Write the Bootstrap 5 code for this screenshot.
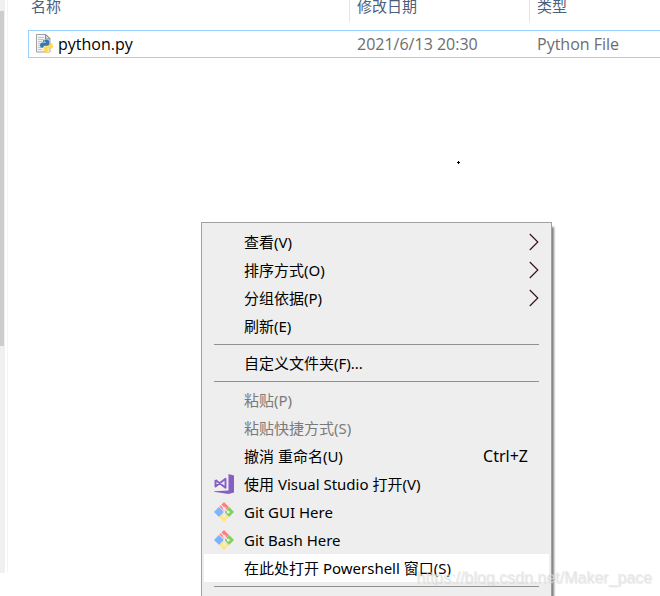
<!DOCTYPE html>
<html lang="zh-CN">
<head>
<meta charset="utf-8">
<meta name="viewport" content="width=device-width, initial-scale=1">
<title>python.py</title>
<link href="https://cdn.jsdelivr.net/npm/bootstrap@5.3.0/dist/css/bootstrap.min.css" rel="stylesheet">
<style>
body { font-family: "Noto Sans", "Noto Sans CJK SC", sans-serif; font-size: 15px; background: #fff; color: #000; }
.scroll-track { width: 5px; margin-bottom: 23px; background: #f0f0f0; padding-top: 11px; }
.scroll-thumb { width: 4px; height: 335px; background: #cdcdcd; }
.pane-edge { width: 1px; margin: 0 20px 23px 2px; background: #f5f5f5; }
.files { table-layout: fixed; border-collapse: separate; border-spacing: 0; color: #6d6d6d; }
.files th { font-weight: 400; color: #4c607a; line-height: 12px; padding: 0 7px 10px; }
.files th:first-child { padding-left: 3px; }
.files th + th { border-left: 1px solid #e5e5e5; padding-left: 7px; }
.files .spacer td { height: 8px; padding: 0; }
.files .file td { border: solid #99d1ff; border-width: 1px 0; height: 28px; line-height: 26px; padding: 0 8px; font-size: 16px; font-family: "Open Sans", sans-serif; }
.files .file td:first-child { border-left-width: 1px; padding-left: 7px; color: #000; }
.col-name { width: 321px; }
.col-date { width: 180px; }
.pointer-dot { left: 457px; top: 161px; width: 3px; height: 3px; }
.context { left: 201px; top: 222px; width: 351px; background: #eee; border: 1px solid #a0a0a0; padding: 5px 2px 24px; box-shadow: 2px 5px 2px rgba(0,0,0,.5); }
.context .entry { border: 0; background: transparent; height: 28px; padding: 0 21px 0 10px; line-height: 28px; color: #000; }
.context .entry:disabled { color: #7a7a7a; }
.context .entry.chosen { background: #fff; }
.context .rule { height: 1px; margin: 4px 10px; background: #919191; border: 0; opacity: 1; }
.context .keys { font-size: 16px; }
.slot { width: 20px; height: 28px; margin-right: 10px; }
.arrow { margin-right: -11px; }
.stamp { right: 8px; bottom: 9px; font: 16px/18px "Liberation Sans", sans-serif; color: rgba(228,228,228,.7); text-shadow: 1px 1px 1px rgba(180,180,180,.35); }
</style>
</head>
<body class="vh-100 overflow-hidden position-relative">
<svg class="d-none" aria-hidden="true">
  <symbol id="git" viewBox="0 0 20 20">
    <path fill="#ff8080" d="M10 0l5 5-4.600 4.600-5-5z"/>
    <path fill="#80b3ff" d="M4.800 5L10 10l-5 5L0 10z"/>
    <path fill="#80cf5f" d="M15.200 5L20 10l-5 5-4.600-5z"/>
    <path fill="#ffe680" d="M10 10.400l4.800 4.800L10 20l-4.800-4.800z"/>
    <path fill="none" stroke="#eee" stroke-width="1.200" d="M6.800 2.800l3.400 3.400V15M10.200 6.200l4 4"/>
    <g fill="#eee"><circle cx="10.200" cy="6.400" r="1.400"/><circle cx="14.300" cy="10.200" r="1.400"/><circle cx="10.200" cy="14.400" r="1.400"/></g>
  </symbol>
  <symbol id="more" viewBox="0 0 10 18"><path fill="none" stroke="#3a1018" stroke-width="1.200" d="M.8 1l8 8-8 8"/></symbol>
</svg>
<div class="d-flex h-100">
  <div class="scroll-track flex-shrink-0"><div class="scroll-thumb"></div></div>
  <div class="pane-edge flex-shrink-0"></div>
  <main class="flex-grow-1">
    <table class="files w-100">
      <colgroup><col class="col-name"><col class="col-date"><col></colgroup>
      <thead><tr><th scope="col">名称</th><th scope="col">修改日期</th><th scope="col">类型</th></tr></thead>
      <tbody>
        <tr class="spacer" aria-hidden="true"><td colspan="3"></td></tr>
        <tr class="file">
          <td><div class="d-flex align-items-center">
            <svg class="me-1" width="18" height="20" viewBox="0 0 18 20" aria-hidden="true">
              <path fill="#f4f4f4" stroke="#a0a0a0" d="M.5 .5h9.500l4 4v13.500H.5z"/>
              <path fill="#ddd" stroke="#8b8b8b" d="M9.500 .5v4.500h4.500z"/>
              <path stroke="#c4c4c4" d="M2 3.500h6M2 5.500h6M2 7.500h4M2 9.500h2M2 11.500h2M2 13.500h3M2 15.500h4"/>
              <path fill="#3778ab" d="M7 7q0-1.500 3-1.500t3.300 1.500v3q0 1.700-1.800 1.700H9q-1.800 0-1.800 2H5.500Q4 13.500 4 11t2-2.600h4V8H7z"/>
              <path fill="#ffd94f" d="M14 9h1.500Q17 9.500 17 12t-1.700 2.600h-4v.6H14V17q0 1.700-3 1.700T7.800 17v-3q0-1.700 1.800-1.700H12q2 0 2-2z"/>
              <circle cx="8.500" cy="7" r=".6" fill="#fff"/><circle cx="12.500" cy="17" r=".6" fill="#fff"/>
            </svg><span>python.py</span></div></td>
          <td>2021/6/13 20:30</td>
          <td>Python File</td>
        </tr>
      </tbody>
    </table>
  </main>
</div>
<svg class="pointer-dot position-absolute" viewBox="0 0 3 3" aria-hidden="true"><path d="M1 0h1v1h1v1H2v1H1V2H0V1h1z"/></svg>
<div class="context position-absolute" role="menu">
  <button type="button" role="menuitem" class="entry d-flex align-items-center w-100"><span class="slot"></span><span>查看(V)</span><svg class="arrow ms-auto" width="10" height="18"><use href="#more"/></svg></button>
  <button type="button" role="menuitem" class="entry d-flex align-items-center w-100"><span class="slot"></span><span>排序方式(O)</span><svg class="arrow ms-auto" width="10" height="18"><use href="#more"/></svg></button>
  <button type="button" role="menuitem" class="entry d-flex align-items-center w-100"><span class="slot"></span><span>分组依据(P)</span><svg class="arrow ms-auto" width="10" height="18"><use href="#more"/></svg></button>
  <button type="button" role="menuitem" class="entry d-flex align-items-center w-100"><span class="slot"></span><span>刷新(E)</span></button>
  <hr class="rule">
  <button type="button" role="menuitem" class="entry d-flex align-items-center w-100"><span class="slot"></span><span>自定义文件夹(F)...</span></button>
  <hr class="rule">
  <button type="button" role="menuitem" class="entry d-flex align-items-center w-100" disabled><span class="slot"></span><span>粘贴(P)</span></button>
  <button type="button" role="menuitem" class="entry d-flex align-items-center w-100" disabled><span class="slot"></span><span>粘贴快捷方式(S)</span></button>
  <button type="button" role="menuitem" class="entry d-flex align-items-center w-100"><span class="slot"></span><span>撤消 重命名(U)</span><span class="keys ms-auto">Ctrl+Z</span></button>
  <button type="button" role="menuitem" class="entry d-flex align-items-center w-100"><svg class="slot" viewBox="0 -4 20 28" aria-hidden="true"><path fill="#865fc5" d="M14.500 0L20 1.500v17L14.500 20 0 17.800v-.6l14.500-.7z"/><path fill="none" stroke="#865fc5" stroke-width="1.900" stroke-linejoin="round" d="M1.500 6v6.500L11.500 4.800v9L1.500 6"/></svg><span>使用 Visual Studio 打开(V)</span></button>
  <button type="button" role="menuitem" class="entry d-flex align-items-center w-100"><svg class="slot" aria-hidden="true"><use href="#git"/></svg><span>Git GUI Here</span></button>
  <button type="button" role="menuitem" class="entry d-flex align-items-center w-100"><svg class="slot" aria-hidden="true"><use href="#git"/></svg><span>Git Bash Here</span></button>
  <button type="button" role="menuitem" class="entry chosen d-flex align-items-center w-100"><span class="slot"></span><span>在此处打开 Powershell 窗口(S)</span></button>
  <hr class="rule">
</div>
<div class="stamp position-absolute">https://blog.csdn.net/Maker_pace</div>
<script src="https://cdn.jsdelivr.net/npm/bootstrap@5.3.0/dist/js/bootstrap.bundle.min.js"></script>
</body>
</html>
